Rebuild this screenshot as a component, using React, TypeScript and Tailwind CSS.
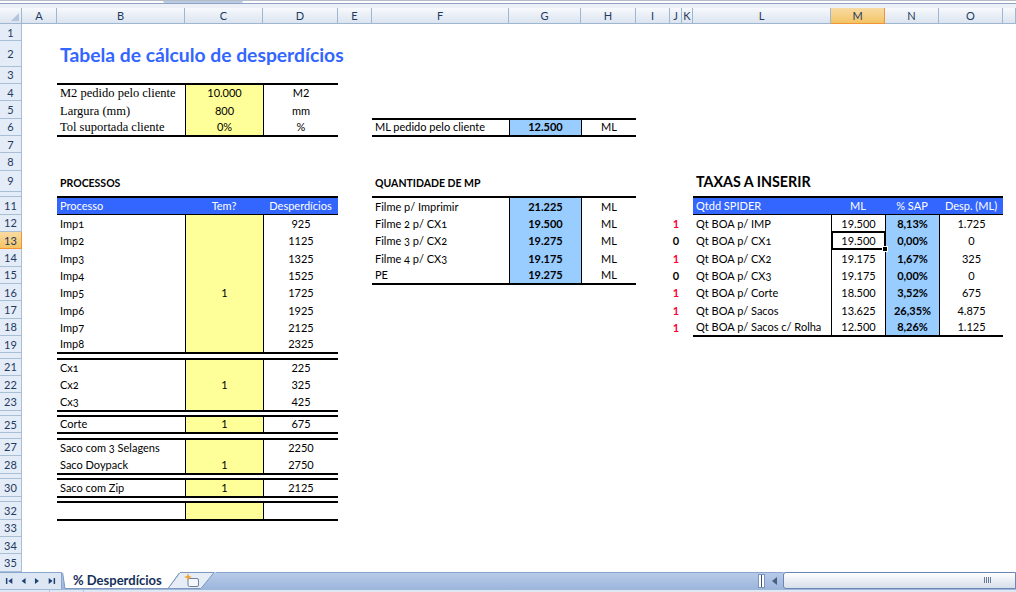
import React from 'react';

const COLS = ['A', 'B', 'C', 'D', 'E', 'F', 'G', 'H', 'I', 'J', 'K', 'L', 'M', 'N', 'O', 'P'] as const;
type Col = (typeof COLS)[number];

const W: Record<Col, string> = {
  A: 'w-[35px]',
  B: 'w-[128px]',
  C: 'w-[78px]',
  D: 'w-[75px]',
  E: 'w-[34px]',
  F: 'w-[137px]',
  G: 'w-[72px]',
  H: 'w-[55px]',
  I: 'w-[34px]',
  J: 'w-[12px]',
  K: 'w-[11px]',
  L: 'w-[138px]',
  M: 'w-[54px]',
  N: 'w-[54px]',
  O: 'w-[64px]',
  P: 'w-[13px]',
};

type Cell = { t?: React.ReactNode; c?: string; sel?: boolean };
type RowDef = { n: number; h: string; cells?: Partial<Record<Col, Cell>>; hl?: boolean; thin?: boolean };

const T = 'border-t border-black';
const Bt = 'border-b border-black';
const Lb = 'border-l border-black';
const YEL = 'bg-[#ffff99]';
const BLU = 'bg-[#99ccff]';
const HDR = 'bg-[#3366ff] text-white';
const CT = 'justify-center';
const SERIF = "font-['Liberation_Serif',serif] text-[12.5px]";
const OSN = 'oldstyle-nums';

const H = 'h-[17.33px]';
const HT = 'h-[5.33px]';

const IMP = [925, 1125, 1325, 1525, 1725, 1925, 2125, 2325];
const FIL: [string, string][] = [
  ['Filme 2 p/ CX1', '19.500'],
  ['Filme 3 p/ CX2', '19.275'],
  ['Filme 4 p/ CX3', '19.175'],
  ['PE', '19.275'],
];
const TAX: string[][] = [
  ['1', 'Qt BOA p/ IMP', '19.500', '8,13%', '1.725'],
  ['0', 'Qt BOA p/ CX1', '19.500', '0,00%', '0'],
  ['1', 'Qt BOA p/ CX2', '19.175', '1,67%', '325'],
  ['0', 'Qt BOA p/ CX3', '19.175', '0,00%', '0'],
  ['1', 'Qt BOA p/ Corte', '18.500', '3,52%', '675'],
  ['1', 'Qt BOA p/ Sacos', '13.625', '26,35%', '4.875'],
  ['1', 'Qt BOA p/ Sacos c/ Rolha', '12.500', '8,26%', '1.125'],
];

function left(b: string, c: string, d: string, ex: string): Partial<Record<Col, Cell>> {
  return {
    B: { t: b, c: `${OSN} ${ex}` },
    C: { t: c, c: `${YEL} ${Lb} ${CT} ${ex}` },
    D: { t: d, c: `${Lb} ${CT} ${ex}` },
  };
}

function thinLeft(n: number): RowDef {
  const c = `${T} ${Bt}`;
  return { n, h: HT, thin: true, cells: { B: { c }, C: { c }, D: { c } } };
}

function buildRows(): RowDef[] {
  const rows: RowDef[] = [];
  rows.push({ n: 1, h: H });
  rows.push({
    n: 2,
    h: 'h-[25.33px]',
    cells: { B: { t: 'Tabela de cálculo de desperdícios', c: 'text-[#3366ff] font-bold text-[19.3px] leading-[22px]' } },
  });
  rows.push({ n: 3, h: H, cells: { B: { c: Bt }, C: { c: Bt }, D: { c: Bt } } });
  rows.push({
    n: 4,
    h: H,
    cells: {
      B: { t: 'M2 pedido pelo cliente', c: `${SERIF} ${T}` },
      C: { t: '10.000', c: `${YEL} ${Lb} ${T} ${CT}` },
      D: { t: 'M2', c: `${Lb} ${T} ${CT}` },
    },
  });
  rows.push({
    n: 5,
    h: H,
    cells: {
      B: { t: 'Largura (mm)', c: SERIF },
      C: { t: '800', c: `${YEL} ${Lb} ${CT}` },
      D: { t: 'mm', c: `${Lb} ${CT}` },
      F: { c: Bt },
      G: { c: Bt },
      H: { c: Bt },
    },
  });
  rows.push({
    n: 6,
    h: H,
    cells: {
      B: { t: 'Tol suportada cliente', c: `${SERIF} ${Bt}` },
      C: { t: '0%', c: `${YEL} ${Lb} ${Bt} ${CT}` },
      D: { t: '%', c: `${Lb} ${Bt} ${CT}` },
      F: { t: 'ML pedido pelo cliente', c: `${T} ${Bt}` },
      G: { t: '12.500', c: `${BLU} font-bold ${Lb} ${T} ${Bt} ${CT}` },
      H: { t: 'ML', c: `${Lb} ${T} ${Bt} ${CT}` },
    },
  });
  rows.push({
    n: 7,
    h: H,
    cells: { B: { c: T }, C: { c: T }, D: { c: T }, F: { c: T }, G: { c: T }, H: { c: T } },
  });
  rows.push({ n: 8, h: H });
  rows.push({
    n: 9,
    h: 'h-[21.33px]',
    cells: {
      B: { t: 'PROCESSOS', c: 'font-bold text-[10.5px] leading-[16px]' },
      F: { t: 'QUANTIDADE DE MP', c: 'font-bold text-[10.5px] leading-[16px]' },
      L: { t: 'TAXAS A INSERIR', c: 'font-bold text-[14.3px] leading-[18px]' },
    },
  });
  rows.push({
    n: 10,
    h: HT,
    thin: true,
    cells: {
      B: { c: Bt }, C: { c: Bt }, D: { c: Bt },
      F: { c: Bt }, G: { c: Bt }, H: { c: Bt },
      L: { c: Bt }, M: { c: Bt }, N: { c: Bt }, O: { c: Bt },
    },
  });
  rows.push({
    n: 11,
    h: H,
    cells: {
      B: { t: 'Processo', c: `${HDR} ${T} ${Bt}` },
      C: { t: 'Tem?', c: `${HDR} ${T} ${Bt} ${CT}` },
      D: { t: 'Desperdícios', c: `${HDR} ${T} ${Bt} ${CT}` },
      F: { t: 'Filme p/ Imprimir', c: T },
      G: { t: '21.225', c: `${BLU} font-bold ${Lb} ${T} ${CT}` },
      H: { t: 'ML', c: `${Lb} ${T} ${CT}` },
      L: { t: 'Qtdd SPIDER', c: `${HDR} ${T} ${Bt}` },
      M: { t: 'ML', c: `${HDR} ${T} ${Bt} ${CT}` },
      N: { t: '% SAP', c: `${HDR} ${T} ${Bt} ${CT}` },
      O: { t: 'Desp. (ML)', c: `${HDR} ${T} ${Bt} ${CT}` },
    },
  });
  for (let i = 0; i < 8; i++) {
    const n = 12 + i;
    const lastB = i === 7 ? Bt : '';
    const cells: Partial<Record<Col, Cell>> = {
      B: { t: `Imp${i + 1}`, c: `${OSN} ${lastB}` },
      C: { t: i === 4 ? '1' : '', c: `${YEL} ${Lb} ${CT} ${lastB}` },
      D: { t: IMP[i], c: `${Lb} ${CT} ${lastB}` },
    };
    if (i < 4) {
      const lf = i === 3 ? Bt : '';
      cells.F = { t: FIL[i][0], c: `${OSN} ${lf}` };
      cells.G = { t: FIL[i][1], c: `${BLU} font-bold ${Lb} ${CT} ${lf}` };
      cells.H = { t: 'ML', c: `${Lb} ${CT} ${lf}` };
    } else if (i === 4) {
      cells.F = { c: T };
      cells.G = { c: T };
      cells.H = { c: T };
    }
    if (i < 7) {
      const tx = TAX[i];
      const lt = i === 6 ? Bt : '';
      cells.J = { t: tx[0], c: `${tx[0] === '1' ? 'text-[#ff0033]' : 'text-black'} font-bold ${CT}` };
      cells.L = { t: tx[1], c: `${OSN} ${lt}` };
      cells.M = { t: tx[2], c: `${Lb} ${CT} ${lt}`, sel: i === 1 };
      cells.N = { t: tx[3], c: `${BLU} font-bold ${Lb} ${CT} ${lt}` };
      cells.O = { t: tx[4], c: `${Lb} ${CT} ${lt}` };
    } else {
      cells.L = { c: T };
      cells.M = { c: T };
      cells.N = { c: T };
      cells.O = { c: T };
    }
    rows.push({ n, h: H, cells, hl: n === 13 });
  }
  rows.push(thinLeft(20));
  rows.push({ n: 21, h: H, cells: left('Cx1', '', '225', T) });
  rows.push({ n: 22, h: H, cells: left('Cx2', '1', '325', '') });
  rows.push({ n: 23, h: H, cells: left('Cx3', '', '425', Bt) });
  rows.push(thinLeft(24));
  rows.push({ n: 25, h: H, cells: left('Corte', '1', '675', `${T} ${Bt}`) });
  rows.push(thinLeft(26));
  rows.push({ n: 27, h: H, cells: left('Saco com 3 Selagens', '', '2250', T) });
  rows.push({ n: 28, h: 'h-[17.67px]', cells: left('Saco Doypack', '1', '2750', Bt) });
  rows.push(thinLeft(29));
  rows.push({ n: 30, h: 'h-[17.67px]', cells: left('Saco com Zip', '1', '2125', `${T} ${Bt}`) });
  rows.push(thinLeft(31));
  rows.push({ n: 32, h: 'h-[18px]', cells: left('', '', '', `${T} ${Bt}`) });
  rows.push({ n: 33, h: H, cells: { B: { c: T }, C: { c: T }, D: { c: T } } });
  rows.push({ n: 34, h: H });
  rows.push({ n: 35, h: H });
  return rows;
}

const ROWS = buildRows();

function CellView({ col, cell }: { col: Col; cell?: Cell }) {
  return (
    <div className={`${W[col]} shrink-0 relative flex items-end px-[3px] pb-[1px] whitespace-nowrap ${cell?.c ?? ''}`}>
      {cell?.t !== undefined && cell.t !== '' && <span>{cell.t}</span>}
      {cell?.sel && (
        <>
          <div className="absolute -left-[1px] -top-[1px] -right-[1px] -bottom-[1px] border-2 border-black z-10" />
          <div className="absolute -right-[3px] -bottom-[3px] w-[6px] h-[6px] bg-black border border-white z-10" />
        </>
      )}
    </div>
  );
}

function RowView({ r }: { r: RowDef }) {
  return (
    <div className={`${r.h} flex shrink-0`}>
      <div
        className={
          r.hl
            ? 'w-[22px] shrink-0 overflow-hidden flex items-center justify-center border-r border-b border-[#f29436] bg-linear-to-b from-[#f9dba3] to-[#f3c463] text-[11px] text-[#1e3a5f]'
            : 'w-[22px] shrink-0 overflow-hidden flex items-center justify-center border-r border-b border-[#a9bfd6] bg-[#e4ecf7] text-[11px] text-[#1e3a5f]'
        }
      >
        {!r.thin && <span className="leading-none">{r.n}</span>}
      </div>
      {COLS.map((c) => (
        <CellView key={c} col={c} cell={r.cells?.[c]} />
      ))}
    </div>
  );
}

function NavIcons() {
  return (
    <svg width="62" height="16" viewBox="0 0 62 16">
      <rect x="6" y="5" width="1.5" height="6" fill="#203f72" />
      <polygon points="12.5,5 12.5,11 8.5,8" fill="#203f72" />
      <polygon points="26,5 26,11 22,8" fill="#203f72" />
      <polygon points="35.5,5 35.5,11 39.5,8" fill="#203f72" />
      <polygon points="49.5,5 49.5,11 53.5,8" fill="#203f72" />
      <rect x="54.5" y="5" width="1.5" height="6" fill="#203f72" />
    </svg>
  );
}

export default function App() {
  return (
    <div className="w-[1016px] h-[592px] overflow-hidden bg-white flex flex-col font-[Lato,sans-serif] text-[11px] leading-[14px] text-black">
      {/* formula bar bottom */}
      <div className="h-[3px] shrink-0 flex border-t border-[#b5bcc6] bg-white">
        <div className="w-[163px]" />
        <div className="w-[80px] rounded-b-[4px] bg-[#b7cae6]" />
      </div>
      <div className="h-[1px] shrink-0 bg-[#8ea4c1]" />
      <div className="h-[4px] shrink-0 bg-[#edf1f7]" />

      {/* column headers */}
      <div className="h-[16px] flex shrink-0">
        <div className="w-[22px] shrink-0 relative border-r border-b border-[#9eb6ce] bg-linear-to-b from-[#f7f9fc] to-[#dbe4f0]">
          <svg className="absolute right-[2px] bottom-[2px]" width="8" height="8" viewBox="0 0 8 8">
            <polygon points="8,0 8,8 0,8" fill="#b3c5dc" />
          </svg>
        </div>
        {COLS.map((c) => (
          <div
            key={c}
            className={
              c === 'M'
                ? `${W[c]} shrink-0 flex items-center justify-center border-r border-b border-[#f29436] bg-linear-to-b from-[#f9dba3] to-[#f3c463] text-[11px] leading-none text-[#1e3a5f]`
                : `${W[c]} shrink-0 flex items-center justify-center border-r border-b border-[#9eb6ce] bg-linear-to-b from-[#f7f9fc] to-[#dbe4f0] text-[11px] leading-none text-[#1e3a5f]`
            }
          >
            {c !== 'P' ? c : ''}
          </div>
        ))}
      </div>

      {/* rows */}
      <div className="flex flex-col shrink-0">
        {ROWS.map((r) => (
          <RowView key={r.n} r={r} />
        ))}
      </div>

      {/* sheet tab bar */}
      <div className="h-[17px] shrink-0 flex bg-linear-to-b from-[#b9cce9] to-[#9db6dc]">
        <div className="w-[62px] shrink-0 border-r border-t border-[#8aa5cd] bg-[#dde7f4] flex items-center">
          <NavIcons />
        </div>
        <div className="relative w-[154px] shrink-0 flex items-center">
          <svg className="absolute inset-0" width="154" height="17" viewBox="0 0 154 17">
            <polygon points="118,0.5 152,0.5 139,16.5 106,16.5" fill="#e6edf7" stroke="#7d98c1" strokeWidth="1" />
            <polygon points="0.5,0 118,0 106,16.5 3,16.5" fill="#ffffff" stroke="#7d98c1" strokeWidth="1" />
            <line x1="0" y1="0" x2="118" y2="0" stroke="#ffffff" strokeWidth="2" />
          </svg>
          <span className="relative ml-[11px] text-[13px] font-bold leading-none text-[#15305a]">% Desperdícios</span>
          <svg className="relative ml-[22px]" width="16" height="16" viewBox="0 0 16 16">
            <rect x="4" y="6.5" width="10.5" height="8" rx="1.5" fill="#f4f7fb" stroke="#6f819c" />
            <polygon points="4,1 5,4 8,5 5,6 4,9 3,6 0,5 3,4" fill="#f0a22e" />
          </svg>
        </div>
        <div className="flex-1 border-t border-[#8aa5cd]" />
        <div className="w-[9px] shrink-0 flex items-center justify-center border-t border-[#8aa5cd]">
          <div className="w-[7px] h-[14px] bg-white border border-[#7a94bd] flex justify-center">
            <div className="w-[1px] h-full bg-[#3d4e68]" />
          </div>
        </div>
        <div className="w-[17px] shrink-0 flex items-center justify-center border-t border-[#8aa5cd]">
          <svg width="6" height="8" viewBox="0 0 6 8">
            <polygon points="5,0 5,8 0,4" fill="#4a5f80" />
          </svg>
        </div>
        <div className="flex-1 max-w-[233px] w-[233px] shrink-0 flex items-center justify-end pr-[24px] border border-[#6b87b5] rounded-l-[3px] bg-linear-to-b from-[#ffffff] to-[#d6dfea]">
          <div className="flex gap-[1px] h-[6px]">
            <div className="w-[1px] bg-[#6a7c95]" />
            <div className="w-[1px] bg-[#6a7c95]" />
            <div className="w-[1px] bg-[#6a7c95]" />
            <div className="w-[1px] bg-[#6a7c95]" />
          </div>
        </div>
      </div>
      <div className="flex-1 flex bg-[#dfe7f3] border-t border-[#9fb7d9]">
        <div className="w-[50px] border-r border-[#b6c7de]" />
        <div className="w-[34px] border-r border-[#b6c7de]" />
      </div>
    </div>
  );
}
